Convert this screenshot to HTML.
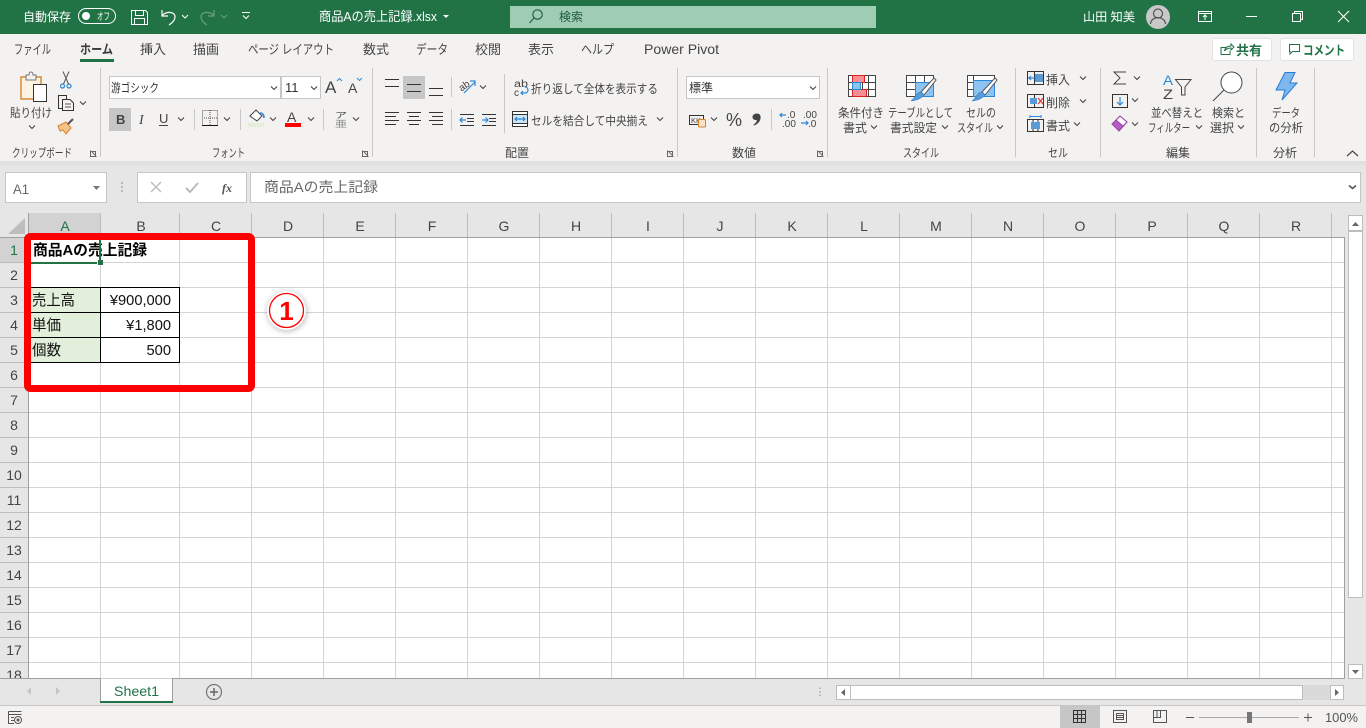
<!DOCTYPE html>
<html lang="ja"><head><meta charset="utf-8"><title>商品Aの売上記録.xlsx</title>
<style>
html,body{margin:0;padding:0;width:1366px;height:728px;overflow:hidden;background:#fff}
svg{display:block}
text{font-family:"Liberation Sans","Noto Sans CJK JP",sans-serif;font-size:12px;fill:#444}
.w{fill:#fff}
.h{font-size:14px;text-anchor:middle;fill:#444}
.c{font-size:14.67px;fill:#111}
.t{font-size:13px}
.n{fill:none;stroke:#444;stroke-width:1}
.k{fill:none;stroke:#333;stroke-width:1}
.b{fill:none;stroke:#2b88d8;stroke-width:1.2}
</style></head><body>
<svg width="1366" height="728" viewBox="0 0 1366 728" xmlns="http://www.w3.org/2000/svg">
<defs>
<path id="c" d="M-3,-1.5L0,1.5L3,-1.5" fill="none" stroke="#444" stroke-width="1.1"/>
<path id="l" d="M0,.5H4.5V5M1,1L4.5,4.5M-.5,-.5V5.5H5.5" fill="none" stroke="#666" stroke-width="1"/>
</defs>
<!-- backgrounds -->
<rect width="1366" height="728" fill="#e6e6e6"/>
<rect y="34" width="1366" height="127" fill="#f3f2f1"/>
<rect y="161" width="1366" height="4" fill="#e1e1e1"/>
<rect width="1366" height="34" fill="#217346"/>
<!-- title bar -->
<text class="w" x="23" y="21" textLength="48" lengthAdjust="spacingAndGlyphs">自動保存</text>
<rect x="78.500" y="8.500" width="37" height="15" rx="7.500" fill="none" stroke="#fff"/>
<circle cx="86" cy="16" r="4" fill="#fff"/>
<text class="w" x="97" y="20" style="font-size:10px" textLength="13" lengthAdjust="spacingAndGlyphs">オフ</text>
<path d="M131.500,10.500H145.500L147.500,12.500V24.500H131.500ZM135.500,10.500V15.500H143.500V10.500M134.500,24.500V18.500H144.500V24.500" fill="none" stroke="#fff"/>
<path d="M162,10V16H168M162,16C165,11 175,11 175,17C175,20 172,23 169,25" fill="none" stroke="#fff" stroke-width="1.200"/>
<path d="M182,15L185,18L188,15" fill="none" stroke="#fff"/>
<path d="M214,10V16H208M214,16C211,11 201,11 201,17C201,20 204,23 207,25" fill="none" stroke="#6a9e82" stroke-width="1.200"/>
<path d="M221,15L224,18L227,15" fill="none" stroke="#6a9e82"/>
<path d="M242,12.500H250M243,15.500L246,18.500L249,15.500" fill="none" stroke="#fff"/>
<text class="w" x="319" y="21" style="font-size:13px" textLength="118" lengthAdjust="spacingAndGlyphs">商品Aの売上記録.xlsx</text>
<path d="M443,15H449L446,18Z" fill="#fff"/>
<rect x="510" y="6" width="366" height="22" fill="#9fcdb3"/>
<circle cx="537.500" cy="14.500" r="4.700" fill="none" stroke="#1f5a3c" stroke-width="1.100"/><path d="M534,18L529.500,23" stroke="#1f5a3c" stroke-width="1.100"/>
<text x="559" y="21" textLength="24" lengthAdjust="spacingAndGlyphs" style="fill:#1f5a3c">検索</text>
<text class="w" x="1083" y="21" textLength="52" lengthAdjust="spacingAndGlyphs">山田 知美</text>
<circle cx="1158" cy="17" r="12" fill="#c8c8c8"/>
<circle cx="1158" cy="13.500" r="4.500" fill="none" stroke="#555" stroke-width="1.200"/><path d="M1150.500,24C1151,15.500 1165,15.500 1165.500,24" fill="none" stroke="#555" stroke-width="1.200"/>
<path d="M1198.500,11.500H1211.500V21.500H1198.500ZM1198.500,13.500H1211.500M1205,20V15M1203,17L1205,15L1207,17" fill="none" stroke="#fff"/>
<path d="M1246,16.500H1257" stroke="#fff"/>
<path d="M1292.500,13.500H1300.500V21.500H1292.500ZM1294.500,13V11.500H1302.500V19.500H1301" fill="none" stroke="#fff"/>
<path d="M1338,11L1349,22M1349,11L1338,22" stroke="#fff" stroke-width="1.100"/>
<!-- tabs -->
<text class="t" x="14" y="54" textLength="37" lengthAdjust="spacingAndGlyphs">ファイル</text>
<text class="t" x="80" y="54" textLength="33" lengthAdjust="spacingAndGlyphs" style="font-weight:bold;fill:#3a3a3a">ホーム</text>
<text class="t" x="140" y="54" textLength="26" lengthAdjust="spacingAndGlyphs">挿入</text>
<text class="t" x="193" y="54" textLength="26" lengthAdjust="spacingAndGlyphs">描画</text>
<text class="t" x="248" y="54" textLength="86" lengthAdjust="spacingAndGlyphs">ページ レイアウト</text>
<text class="t" x="363" y="54" textLength="26" lengthAdjust="spacingAndGlyphs">数式</text>
<text class="t" x="416" y="54" textLength="32" lengthAdjust="spacingAndGlyphs">データ</text>
<text class="t" x="475" y="54" textLength="26" lengthAdjust="spacingAndGlyphs">校閲</text>
<text class="t" x="528" y="54" textLength="26" lengthAdjust="spacingAndGlyphs">表示</text>
<text class="t" x="581" y="54" textLength="33" lengthAdjust="spacingAndGlyphs">ヘルプ</text>
<text x="644" y="54" textLength="75" lengthAdjust="spacingAndGlyphs" style="font-size:14px">Power Pivot</text>
<rect x="80" y="59" width="34" height="3" fill="#217346"/>
<!-- share / comment -->
<rect x="1212.500" y="38.500" width="59" height="22" rx="2" fill="#fff" stroke="#e3e3e3"/>
<rect x="1280.500" y="38.500" width="73" height="22" rx="2" fill="#fff" stroke="#e3e3e3"/>
<path d="M1226,47.500H1221V54.500H1230V51M1224.500,51C1225,48 1227,46 1231,46V44L1234,47L1231,50V48C1228,48 1226,49 1224.500,51Z" fill="none" stroke="#217346"/>
<text x="1236" y="55" textLength="26" lengthAdjust="spacingAndGlyphs" style="font-size:13px;font-weight:bold;fill:#217346">共有</text>
<path d="M1289.500,44.500H1299.500V51.500H1292.500L1290,54V51.500H1289.500Z" fill="none" stroke="#217346"/>
<text x="1303" y="55" textLength="42" lengthAdjust="spacingAndGlyphs" style="font-size:13px;font-weight:bold;fill:#217346">コメント</text>
<!-- separators -->
<g stroke="#c8c8c8" shape-rendering="crispEdges">
<path d="M100.500,68V157M372.500,68V157M677.500,68V157M827.500,68V157M1015.500,68V157M1100.500,68V157M1256.500,68V157M1314.500,68V157"/>
<path d="M194.500,109V130M240.500,109V130M323.500,109V130M451.500,77V97M451.500,109V130M504.500,74V133M771.500,109V130"/>
</g>
<!-- group labels -->
<text x="12" y="157" textLength="60" lengthAdjust="spacingAndGlyphs">クリップボード</text>
<text x="212" y="157" textLength="33" lengthAdjust="spacingAndGlyphs">フォント</text>
<text x="505" y="157" textLength="24" lengthAdjust="spacingAndGlyphs">配置</text>
<text x="732" y="157" textLength="24" lengthAdjust="spacingAndGlyphs">数値</text>
<text x="903" y="157" textLength="36" lengthAdjust="spacingAndGlyphs">スタイル</text>
<text x="1048" y="157" textLength="20" lengthAdjust="spacingAndGlyphs">セル</text>
<text x="1166" y="157" textLength="24" lengthAdjust="spacingAndGlyphs">編集</text>
<text x="1273" y="157" textLength="24" lengthAdjust="spacingAndGlyphs">分析</text>
<use href="#l" x="91" y="151"/><use href="#l" x="363" y="151"/><use href="#l" x="668" y="151"/><use href="#l" x="818" y="151"/>
<path d="M1347,156L1352.500,151L1358,156" fill="none" stroke="#444" stroke-width="1.200"/>
<!-- clipboard -->
<rect x="21" y="77" width="20" height="22" fill="#fdf3e3" stroke="#d9822b" stroke-width="1.400"/>
<path d="M26,80V75H29C29,71 33,71 33,75H36V80Z" fill="#f3f2f1" stroke="#777"/>
<rect x="33.500" y="84.500" width="13" height="17" fill="#fff" stroke="#333"/>
<text x="10" y="117" textLength="42" lengthAdjust="spacingAndGlyphs">貼り付け</text>
<use href="#c" x="32" y="127"/>
<circle cx="62.500" cy="86" r="2" fill="none" stroke="#2b88d8" stroke-width="1.200"/><circle cx="69" cy="86" r="2" fill="none" stroke="#2b88d8" stroke-width="1.200"/>
<path d="M63.500,84L69,71.500M68.500,84L63,71.500" stroke="#555" fill="none"/>
<path d="M58.500,95.500H66.500V108.500H58.500Z" fill="none" stroke="#333"/><path d="M62.500,99.500H70L73.500,103V110.500H62.500Z" fill="#f3f2f1" stroke="#333"/><path d="M65,104H71M65,107H71" stroke="#555"/>
<use href="#c" x="83" y="103"/>
<path d="M58,126L66,122L71,128L66,134L63,130L60,131Z" fill="#f3c48a" stroke="#d9822b"/><path d="M68,124L73,119" stroke="#555" stroke-width="2"/>
<!-- font -->
<rect x="109.500" y="76.500" width="171" height="22" fill="#fff" stroke="#c6c6c6"/>
<rect x="281.500" y="76.500" width="39" height="22" fill="#fff" stroke="#c6c6c6"/>
<text x="111" y="92" textLength="48" lengthAdjust="spacingAndGlyphs" style="fill:#333">游ゴシック</text>
<text x="285" y="92" style="font-size:13px;fill:#333">11</text>
<use href="#c" x="274" y="88"/><use href="#c" x="314" y="88"/>
<text x="325" y="93" style="font-size:17px">A</text><path d="M337,81L339.500,78.500L342,81" fill="none" stroke="#2b88d8"/>
<text x="348" y="93" style="font-size:14px">A</text><path d="M357,78L359.500,80.500L362,78" fill="none" stroke="#2b88d8"/>
<rect x="109" y="108" width="22" height="23" fill="#c6c6c6"/>
<text x="116" y="124" style="font-size:13px;font-weight:bold">B</text>
<text x="139" y="124" style="font-size:14px;font-style:italic;font-family:'Liberation Serif',serif">I</text>
<text x="159" y="123" style="font-size:13px">U</text><path d="M159,125.500H168" stroke="#444"/>
<use href="#c" x="181" y="119"/>
<path d="M202.500,110.500H217.500V125.500H202.500ZM210,110V125M202,118H218" fill="none" stroke="#555" stroke-dasharray="1 1"/><path d="M202,125.500H218" stroke="#111"/>
<use href="#c" x="227" y="119"/>
<path d="M250,116L256,110L262,116L257,121Z" fill="#fff" stroke="#444"/><path d="M260,113C263,113 264,115 264,118" fill="none" stroke="#2b88d8" stroke-width="1.600"/>
<rect x="248" y="123" width="16" height="4" fill="#e2efda"/>
<use href="#c" x="273" y="119"/>
<text x="287" y="122" style="font-size:14px">A</text><rect x="285" y="123" width="16" height="4" fill="#f00"/>
<use href="#c" x="311" y="119"/>
<text x="335" y="118" style="font-size:8px" textLength="12" lengthAdjust="spacingAndGlyphs">ア</text><text x="335" y="127" style="font-size:9px;fill:#888" textLength="12" lengthAdjust="spacingAndGlyphs">亜</text>
<use href="#c" x="356" y="119"/>
<!-- alignment -->
<rect x="403" y="76" width="22" height="23" fill="#c6c6c6"/>
<path class="k" d="M385,79.500H399M385,86.500H399"/>
<path class="k" d="M407,84.500H421M407,91.500H421"/>
<path class="k" d="M429,88.500H443M429,95.500H443"/>
<path class="k" d="M385,112.500H399M385,116.500H396M385,120.500H399M385,124.500H396"/>
<path class="k" d="M407,112.500H421M409,116.500H419M407,120.500H421M409,124.500H419"/>
<path class="k" d="M429,112.500H443M432,116.500H443M429,120.500H443M432,124.500H443"/>
<text x="459" y="90" style="font-size:10px" transform="rotate(-35 463 87)">ab</text><path d="M464,93L475,82M470,81H475V86" class="b"/>
<use href="#c" x="483" y="87"/>
<path class="k" d="M460,114.500H474M467,118.500H474M467,121.500H474M460,125.500H474"/><path class="b" d="M460,120H466M462.500,117.500L460,120L462.500,122.500"/>
<path class="k" d="M482,114.500H496M489,118.500H496M489,121.500H496M482,125.500H496"/><path class="b" d="M482,120H488M485.500,117.500L488,120L485.500,122.500"/>
<text x="514" y="87" style="font-size:10px" textLength="14" lengthAdjust="spacingAndGlyphs">ab</text><text x="514" y="96" style="font-size:10px">c</text><path class="b" d="M521,93H525C529,93 529,87 525,87M523,91L521,93L523,95"/>
<text x="531" y="93" textLength="127" lengthAdjust="spacingAndGlyphs">折り返して全体を表示する</text>
<rect x="512.500" y="111.500" width="15" height="15" fill="#fff" stroke="#333"/><rect x="513" y="115" width="14" height="8" fill="#cfe4f7"/><path d="M513,114.500H527M513,123.500H527" stroke="#333"/><path class="b" d="M515,119H525M517,117L515,119L517,121M523,117L525,119L523,121"/>
<text x="531" y="125" textLength="117" lengthAdjust="spacingAndGlyphs">セルを結合して中央揃え</text>
<use href="#c" x="660" y="119"/>
<!-- number -->
<rect x="686.500" y="76.500" width="133" height="22" fill="#fff" stroke="#c6c6c6"/>
<text x="689" y="92" textLength="24" lengthAdjust="spacingAndGlyphs" style="fill:#333">標準</text>
<use href="#c" x="813" y="88"/>
<rect x="689.500" y="115.500" width="14" height="9" fill="none" stroke="#333"/><text x="691" y="123" style="font-size:7px" textLength="10" lengthAdjust="spacingAndGlyphs">KK</text>
<rect x="698.500" y="119.500" width="7" height="7.500" rx="1" fill="#fbe3c5" stroke="#d9822b"/>
<use href="#c" x="714" y="119"/>
<text x="726" y="126" style="font-size:18px" textLength="16" lengthAdjust="spacingAndGlyphs">%</text>
<path d="M757,113.500C760,113.500 761,116 760.500,118.500C760,122 757,124.500 754,125.500L753.500,124.500C755.500,123.500 756.500,122 757,120C754.500,120.500 752.500,119 752.500,117C752.500,115 754.500,113.500 757,113.500Z" fill="#444"/>
<text x="787" y="118" style="font-size:10px">.0</text><text x="782" y="127" style="font-size:10px">.00</text><path class="b" d="M780,115H786M782,113L780,115L782,117"/>
<text x="803" y="118" style="font-size:10px">.00</text><text x="808" y="127" style="font-size:10px">.0</text><path class="b" d="M801,123H808M806,121L808,123L806,125"/>
<!-- styles -->
<path d="M848.500,75.500H875.500V96.500H848.500ZM848.500,82.500H875.500M848.500,89.500H875.500M855.500,75.500V96.500M862.500,75.500V96.500M868.500,75.500V96.500" fill="#fff" stroke="#444"/>
<rect x="852.500" y="75.500" width="12" height="7" fill="#f88f95" stroke="#d22"/><rect x="852.500" y="89.500" width="14" height="7" fill="#f88f95" stroke="#d22"/><rect x="852.500" y="82.500" width="8" height="7" fill="#8cc3f0" stroke="#2b88d8"/>
<path d="M906.500,75.500H933.500V96.500H906.500ZM906.500,82.500H933.500M906.500,89.500H933.500M915.500,75.500V96.500M924.500,75.500V96.500" fill="#fff" stroke="#444"/>
<rect x="915.500" y="82.500" width="18" height="14" fill="#8cc3f0" stroke="#2b88d8"/>
<path d="M921,92L934,78L936,80L924,95Z" fill="#fff" stroke="#555"/><path d="M911,101C915,99 916,92 921,92L924,95C921,99 917,100 911,101Z" fill="#5a9bd5" stroke="#2b7cd3" stroke-width=".6"/>
<path d="M967.500,75.500H994.500V96.500H967.500ZM967.500,82.500H994.500M967.500,89.500H994.500M973.500,75.500V96.500" fill="#fff" stroke="#444"/>
<rect x="973.500" y="80.500" width="21" height="16" fill="#8cc3f0" stroke="#2b88d8"/>
<path d="M982,92L995,78L997,80L985,95Z" fill="#fff" stroke="#555"/><path d="M972,101C976,99 977,92 982,92L985,95C982,99 978,100 972,101Z" fill="#5a9bd5" stroke="#2b7cd3" stroke-width=".6"/>
<text x="838" y="117" textLength="46" lengthAdjust="spacingAndGlyphs">条件付き</text>
<text x="843" y="132" textLength="24" lengthAdjust="spacingAndGlyphs">書式</text><use href="#c" x="874" y="127"/>
<text x="888" y="117" textLength="65" lengthAdjust="spacingAndGlyphs">テーブルとして</text>
<text x="890" y="132" textLength="47" lengthAdjust="spacingAndGlyphs">書式設定</text><use href="#c" x="945" y="127"/>
<text x="966" y="117" textLength="30" lengthAdjust="spacingAndGlyphs">セルの</text>
<text x="957" y="132" textLength="36" lengthAdjust="spacingAndGlyphs">スタイル</text><use href="#c" x="1000" y="127"/>
<!-- cells -->
<path class="k" d="M1027.500,71.500H1043.500V84.500H1027.500ZM1027.500,78H1043.500M1034.500,71.500V84.500"/>
<rect x="1035" y="74" width="8" height="8" fill="#5a9bd5"/><path d="M1029,78H1036M1031,76L1029,78L1031,80" fill="none" stroke="#2b88d8" stroke-width="1.200"/>
<text x="1046" y="84" textLength="24" lengthAdjust="spacingAndGlyphs">挿入</text><use href="#c" x="1083" y="78"/>
<path class="k" d="M1027.500,94.500H1043.500V107.500H1027.500ZM1034.500,94.500V107.500"/>
<rect x="1030" y="98" width="7" height="6" fill="#5a9bd5"/><path d="M1038,98L1043,104M1043,98L1038,104" stroke="#e04040" stroke-width="1.300"/>
<text x="1046" y="107" textLength="24" lengthAdjust="spacingAndGlyphs">削除</text><use href="#c" x="1083" y="101"/>
<path class="k" d="M1027.500,119.500H1043.500V131.500H1027.500ZM1033,119.500V131.500M1038,119.500V131.500"/>
<rect x="1031" y="122" width="9" height="7" fill="#5a9bd5"/><path d="M1030,116.500H1041M1030,115V118M1041,115V118" stroke="#2b88d8"/>
<text x="1046" y="130" textLength="24" lengthAdjust="spacingAndGlyphs">書式</text><use href="#c" x="1077" y="124"/>
<!-- editing -->
<path d="M1126,72H1114L1120,78L1114,84H1126" fill="none" stroke="#444"/><use href="#c" x="1137" y="78"/>
<rect x="1112.500" y="94.500" width="15" height="13" fill="none" stroke="#333"/><path class="b" d="M1120,97V105M1117,102L1120,105L1123,102"/><use href="#c" x="1135" y="100"/>
<path d="M1112,124L1120,116L1127,122L1119,131Z" fill="#b55cc2" stroke="#9a3fa8"/><path d="M1116,120L1120,116L1127,122L1123,126Z" fill="#fff" stroke="#9a3fa8"/><use href="#c" x="1135" y="124"/>
<text x="1163" y="85" style="font-size:14px;fill:#2b88d8" textLength="10" lengthAdjust="spacingAndGlyphs">A</text>
<text x="1163" y="99" style="font-size:14px" textLength="10" lengthAdjust="spacingAndGlyphs">Z</text>
<path d="M1175.500,79.500H1191L1185,87V95H1181.500V87Z" fill="none" stroke="#444"/>
<text x="1151" y="117" textLength="52" lengthAdjust="spacingAndGlyphs">並べ替えと</text>
<text x="1148" y="132" textLength="42" lengthAdjust="spacingAndGlyphs">フィルター</text><use href="#c" x="1199" y="127"/>
<circle cx="1231.500" cy="82.500" r="10.500" fill="#fff" stroke="#444"/><path d="M1224,90L1213,101" stroke="#444"/>
<text x="1212" y="117" textLength="33" lengthAdjust="spacingAndGlyphs">検索と</text>
<text x="1210" y="132" textLength="24" lengthAdjust="spacingAndGlyphs">選択</text><use href="#c" x="1241" y="127"/>
<path d="M1285,72.500H1295L1290,83H1297L1282,100L1285,90H1276Z" fill="#7fb8ee" stroke="#2b7cd3"/>
<text x="1272" y="117" textLength="28" lengthAdjust="spacingAndGlyphs">データ</text>
<text x="1269" y="132" textLength="34" lengthAdjust="spacingAndGlyphs">の分析</text>
<!-- formula bar -->
<rect x="5.500" y="172.500" width="101" height="30" fill="#fff" stroke="#c6c6c6"/>
<text x="13" y="194" style="font-size:14px;fill:#666" textLength="16" lengthAdjust="spacingAndGlyphs">A1</text>
<path d="M93,186H100L96.500,190Z" fill="#777"/>
<path d="M122,182V184M122,186V188M122,190V192" stroke="#aaa" stroke-width="1.500"/>
<rect x="137.500" y="172.500" width="109" height="30" fill="#fff" stroke="#c6c6c6"/>
<path d="M151,182L161,192M161,182L151,192" stroke="#bbb" stroke-width="1.400"/>
<path d="M186,188L190,192L198,183" fill="none" stroke="#bbb" stroke-width="2"/>
<text x="222" y="192" style="font-size:12px;font-style:italic;font-weight:bold;font-family:'Liberation Serif',serif;fill:#555">fx</text>
<rect x="250.500" y="172.500" width="1110" height="30" fill="#fff" stroke="#c6c6c6"/>
<text x="264" y="192" textLength="114" lengthAdjust="spacingAndGlyphs" style="font-size:14px;fill:#666">商品Aの売上記録</text>
<path d="M1349,185.500L1352.500,188.500L1356,185.500" fill="none" stroke="#555" stroke-width="1.600"/>
<!-- sheet -->
<rect x="29" y="238" width="1315" height="440" fill="#fff"/>
<rect x="29" y="213" width="72" height="24" fill="#d2d2d2"/>
<rect y="238" width="28" height="24" fill="#d2d2d2"/>
<path d="M25,218V234H8Z" fill="#bdbdbd"/>
<g stroke="#d4d4d4" fill="none" shape-rendering="crispEdges">
<path d="M100.500,238V678M179.500,238V678M251.500,238V678M323.500,238V678M395.500,238V678M467.500,238V678M539.500,238V678M611.500,238V678M683.500,238V678M755.500,238V678M827.500,238V678M899.500,238V678M971.500,238V678M1043.500,238V678M1115.500,238V678M1187.500,238V678M1259.500,238V678M1331.500,238V678"/>
<path d="M29,262.500H1344M29,287.500H1344M29,312.500H1344M29,337.500H1344M29,362.500H1344M29,387.500H1344M29,412.500H1344M29,437.500H1344M29,462.500H1344M29,487.500H1344M29,512.500H1344M29,537.500H1344M29,562.500H1344M29,587.500H1344M29,612.500H1344M29,637.500H1344M29,662.500H1344"/>
</g>
<g stroke="#bdbdbd" fill="none" shape-rendering="crispEdges">
<path d="M28.500,213V237M100.500,213V237M179.500,213V237M251.500,213V237M323.500,213V237M395.500,213V237M467.500,213V237M539.500,213V237M611.500,213V237M683.500,213V237M755.500,213V237M827.500,213V237M899.500,213V237M971.500,213V237M1043.500,213V237M1115.500,213V237M1187.500,213V237M1259.500,213V237M1331.500,213V237"/>
<path d="M0,262.500H28M0,287.500H28M0,312.500H28M0,337.500H28M0,362.500H28M0,387.500H28M0,412.500H28M0,437.500H28M0,462.500H28M0,487.500H28M0,512.500H28M0,537.500H28M0,562.500H28M0,587.500H28M0,612.500H28M0,637.500H28M0,662.500H28"/>
</g>
<path d="M28.500,213V678M0,237.500H1344.500V678.500H0" stroke="#9f9f9f" fill="none" shape-rendering="crispEdges"/>
<g>
<text class="h" x="65" y="231" style="fill:#217346">A</text><text class="h" x="141" y="231">B</text><text class="h" x="216" y="231">C</text><text class="h" x="288" y="231">D</text><text class="h" x="360" y="231">E</text><text class="h" x="432" y="231">F</text><text class="h" x="504" y="231">G</text><text class="h" x="576" y="231">H</text><text class="h" x="648" y="231">I</text><text class="h" x="720" y="231">J</text><text class="h" x="792" y="231">K</text><text class="h" x="864" y="231">L</text><text class="h" x="936" y="231">M</text><text class="h" x="1008" y="231">N</text><text class="h" x="1080" y="231">O</text><text class="h" x="1152" y="231">P</text><text class="h" x="1224" y="231">Q</text><text class="h" x="1296" y="231">R</text>
<text class="h" x="14" y="255" style="fill:#217346">1</text><text class="h" x="14" y="280">2</text><text class="h" x="14" y="305">3</text><text class="h" x="14" y="330">4</text><text class="h" x="14" y="355">5</text><text class="h" x="14" y="380">6</text><text class="h" x="14" y="405">7</text><text class="h" x="14" y="430">8</text><text class="h" x="14" y="455">9</text><text class="h" x="14" y="480">10</text><text class="h" x="14" y="505">11</text><text class="h" x="14" y="530">12</text><text class="h" x="14" y="555">13</text><text class="h" x="14" y="580">14</text><text class="h" x="14" y="605">15</text><text class="h" x="14" y="630">16</text><text class="h" x="14" y="655">17</text>
</g>
<svg x="0" y="663" width="28" height="15"><text class="h" x="14" y="17">18</text></svg>
<!-- table -->
<rect x="29" y="288" width="71" height="74" fill="#e2efda"/>
<path d="M29,287.500H179.500V362.500H29M29,312.500H179.500M29,337.500H179.500M100.500,287.500V362.500" fill="none" stroke="#000" shape-rendering="crispEdges"/>
<text class="c" x="33" y="255" textLength="114" lengthAdjust="spacingAndGlyphs" style="font-weight:bold;fill:#000">商品Aの売上記録</text>
<text class="c" x="32" y="305" textLength="43" lengthAdjust="spacingAndGlyphs">売上高</text>
<text class="c" x="32" y="330" textLength="29" lengthAdjust="spacingAndGlyphs">単価</text>
<text class="c" x="32" y="355" textLength="29" lengthAdjust="spacingAndGlyphs">個数</text>
<text class="c" x="171" y="305" text-anchor="end">¥900,000</text>
<text class="c" x="171" y="330" text-anchor="end">¥1,800</text>
<text class="c" x="171" y="355" text-anchor="end">500</text>
<!-- selection -->
<rect x="99" y="237" width="2" height="24" fill="#217346"/>
<rect x="29" y="262" width="68" height="2" fill="#217346"/>
<rect x="98" y="260" width="5" height="5" fill="#217346"/>
<!-- annotation -->
<rect x="27.500" y="236.500" width="224" height="152" rx="3" fill="none" stroke="#f00" stroke-width="7"/>
<defs><filter id="g" x="-30%" y="-30%" width="160%" height="160%"><feGaussianBlur stdDeviation="3"/></filter></defs>
<circle cx="287" cy="311.500" r="20" fill="#000" opacity=".25" filter="url(#g)"/>
<circle cx="286.500" cy="310.500" r="19.500" fill="#fff"/>
<circle cx="286.500" cy="310.500" r="17" fill="#fff" stroke="#f00" stroke-width="1.300"/>
<text x="286.500" y="320" text-anchor="middle" style="font-size:26px;font-weight:bold;fill:#f00">1</text>
<!-- vertical scrollbar -->
<rect x="1348.500" y="215.500" width="14" height="15" fill="#fff" stroke="#bdbdbd"/>
<path d="M1352,226H1359L1355.500,222Z" fill="#666"/>
<rect x="1348.500" y="231.500" width="14" height="366" fill="#fff" stroke="#bdbdbd"/>
<rect x="1348.500" y="664.500" width="14" height="14" fill="#fff" stroke="#bdbdbd"/>
<path d="M1352,670H1359L1355.500,674Z" fill="#666"/>
<!-- tab bar -->
<path d="M31,687V695L27,691Z" fill="#c4c4c4"/>
<path d="M56,687V695L60,691Z" fill="#c4c4c4"/>
<path d="M100.500,678.500V702.500H172.500V678.500" fill="#fff" stroke="#9f9f9f"/>
<rect x="100" y="701" width="73" height="2" fill="#217346"/>
<text x="114" y="696" textLength="45" lengthAdjust="spacingAndGlyphs" style="font-size:14px;fill:#217346">Sheet1</text>
<circle cx="214" cy="692" r="7.500" fill="none" stroke="#777" stroke-width="1.200"/><path d="M210,692H218M214,688V696" stroke="#666" stroke-width="1.500"/>
<path d="M820,687.500V689M820,691V692.500M820,694.500V696" stroke="#aaa" stroke-width="1.500"/>
<rect x="836.500" y="685.500" width="14" height="14" fill="#fff" stroke="#bdbdbd"/>
<path d="M845,689V696L841,692.500Z" fill="#666"/>
<rect x="850.500" y="685.500" width="452" height="14" fill="#fff" stroke="#bdbdbd"/>
<rect x="1303" y="685" width="27" height="15" fill="#dadada"/>
<rect x="1330.500" y="685.500" width="13" height="14" fill="#fff" stroke="#bdbdbd"/>
<path d="M1335,689V696L1339,692.500Z" fill="#666"/>
<!-- status bar -->
<rect y="706" width="1366" height="22" fill="#f3f2f1"/>
<rect y="705" width="1366" height="1" fill="#c6c6c6"/>
<path d="M8.500,711.500H21.500M8.500,714.500H21.500M8.500,711.500V723.500H14M11,717.500H14M11,720.500H14" fill="none" stroke="#555"/>
<circle cx="18" cy="720" r="3.500" fill="#f3f2f1" stroke="#555"/><circle cx="18" cy="720" r="1.500" fill="#555"/>
<rect x="1060" y="706" width="40" height="22" fill="#c6c6c6"/>
<path d="M1073.500,710.500H1085.500V722.500H1073.500ZM1073.500,714.500H1085.500M1073.500,718.500H1085.500M1077.500,710.500V722.500M1081.500,710.500V722.500" fill="none" stroke="#333"/>
<path d="M1113.500,710.500H1126.500V722.500H1113.500ZM1116.500,713.500H1123.500V719.500H1116.500ZM1117,715.500H1123M1117,717.500H1123" fill="none" stroke="#555"/>
<path d="M1153.500,710.500H1166.500V722.500H1153.500ZM1153.500,717.500H1160.500V710.500M1157,710.500V717.500" fill="none" stroke="#555"/>
<path d="M1186,717.500H1194" stroke="#555"/>
<path d="M1199,717.500H1299" stroke="#aaa"/>
<rect x="1247" y="712" width="5" height="11" fill="#777"/>
<path d="M1304,717.500H1312M1308,713.500V721.500" stroke="#555"/>
<text x="1325" y="722" textLength="33" lengthAdjust="spacingAndGlyphs" style="font-size:12.500px;fill:#555">100%</text>
</svg>
</body></html>
